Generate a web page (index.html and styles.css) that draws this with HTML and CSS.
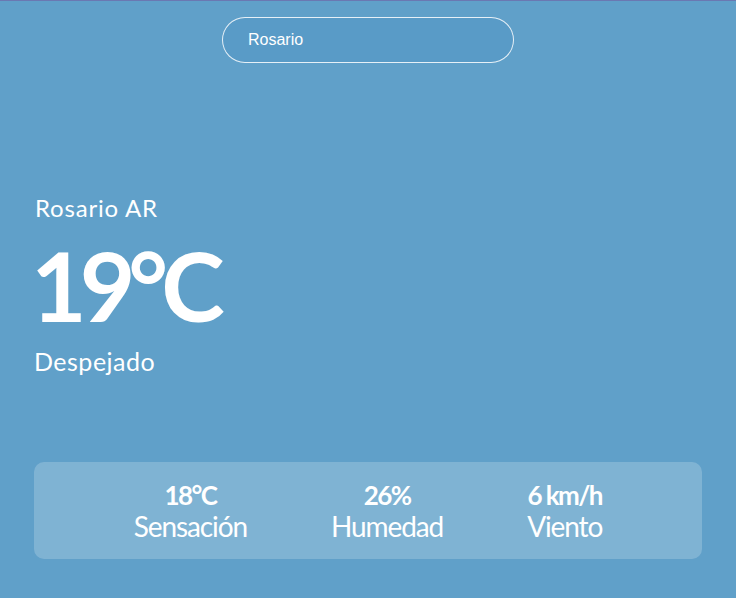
FILE: index.html
```html
<!DOCTYPE html>
<html lang="es">
<head>
<meta charset="utf-8">
<link rel="stylesheet" href="styles.css">
</head>
<body>
<div class="app">
  <header class="search">
    <input class="search-input" type="text" value="Rosario">
  </header>
  <section class="current">
    <div class="city">Rosario AR</div>
    <div class="temp">19°C</div>
    <div class="desc">Despejado</div>
  </section>
  <section class="details">
    <div class="item"><div class="value">18°C</div><div class="label">Sensación</div></div>
    <div class="item"><div class="value">26%</div><div class="label">Humedad</div></div>
    <div class="item"><div class="value">6 km/h</div><div class="label">Viento</div></div>
  </section>
</div>
</body>
</html>
```
FILE: styles.css
```css
html, body { margin: 0; padding: 0; }
body {
  background: #60a0c9;
  border-top: 1px solid #6a78b2;
  height: 597px;
  overflow: hidden;
  font-family: Lato, "Noto Sans", sans-serif;
  color: #fff;
}
.app { display: flex; flex-direction: column; padding: 0 34px; }
.search { display: flex; justify-content: center; padding-top: 16px; }
.search-input {
  box-sizing: border-box;
  width: 292px;
  height: 46px;
  border-radius: 23px;
  border: 1px solid rgba(255,255,255,0.85);
  background: #599bc7;
  color: #fff;
  font-family: Arial, "Liberation Sans", sans-serif;
  font-size: 16px;
  padding: 0 25px;
  outline: none;
}
.current { display: flex; flex-direction: column; padding: 130px 0 0 1px; }
.city { font-size: 24px; font-weight: 400; line-height: 30px; letter-spacing: 0.8px; }
.temp { font-size: 96px; font-weight: 700; line-height: 124px; letter-spacing: -7px; margin-left: -4px; }
.desc { font-size: 25px; font-weight: 400; line-height: 29px; letter-spacing: 0.5px; margin-left: -1px; }
.details {
  margin-top: 86px;
  display: flex;
  justify-content: center;
  gap: 84px;
  background: rgba(255,255,255,0.2);
  border-radius: 10px;
  padding: 18px 0 16px;
}
.item { display: flex; flex-direction: column; align-items: center; }
.value { font-size: 26px; font-weight: 700; line-height: 30px; letter-spacing: -1.6px; }
.label { font-size: 28px; font-weight: 400; line-height: 33px; letter-spacing: -1.1px; }
```
